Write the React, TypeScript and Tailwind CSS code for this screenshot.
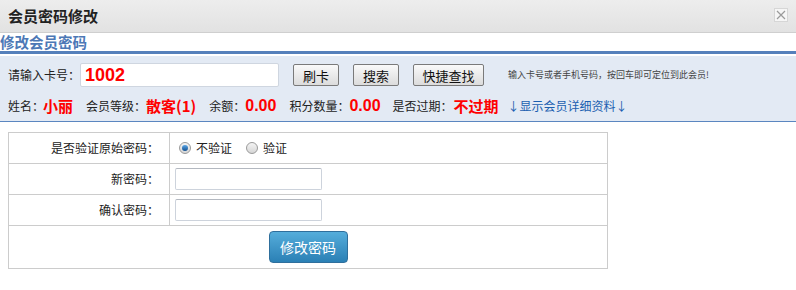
import React from "react";

const cjk = { fontFamily: '"Noto Sans CJK SC", "Liberation Sans", sans-serif' };
const num = { fontFamily: '"Liberation Sans", "Noto Sans CJK SC", sans-serif' };

function Radio({ checked, label }: { checked?: boolean; label: string }) {
  return (
    <label className="flex items-center">
      <span className="flex h-[12px] w-[12px] items-center justify-center rounded-full border border-[#9a9a9a] bg-gradient-to-b from-[#f4f4f4] to-[#d6d6d6]">
        {checked && <span className="h-[6px] w-[6px] rounded-full bg-gradient-to-b from-[#5aa7e8] to-[#13508f]" />}
      </span>
      <span className="ml-[5px] text-[12px] text-[#222]">{label}</span>
    </label>
  );
}

function GrayButton({ children, w }: { children: React.ReactNode; w: string }) {
  return (
    <button
      className={`${w} h-[22px] rounded-[2px] border border-[#7a7a7a] bg-gradient-to-b from-[#fafafa] to-[#dcdcdc] text-[13px] leading-none text-[#111]`}
    >
      {children}
    </button>
  );
}

export default function App() {
  return (
    <div className="h-[290px] w-[796px] overflow-hidden bg-white text-[12px] text-[#222]" style={cjk}>
      {/* title bar */}
      <div className="flex h-[33px] items-center justify-between border-b border-[#cfcfcf] bg-gradient-to-b from-[#ededed] to-[#e2e2e2] pl-[8px] pr-[8px]">
        <span className="text-[15px] font-bold text-[#222]">会员密码修改</span>
        <span className="mb-[3px] flex h-[14px] w-[14px] items-center justify-center border border-[#d6d6d6] bg-[#f6f6f6]">
          <svg width="10" height="10" viewBox="0 0 10 10">
            <path d="M1 1L9 9M9 1L1 9" stroke="#9a9a9a" strokeWidth="1.2" />
          </svg>
        </span>
      </div>

      <div className="h-[18px] text-[14.5px] font-bold leading-[18px] text-[#4d78b6]">修改会员密码</div>
      <div className="h-[3px] bg-[#5580bb]" />

      {/* search panel */}
      <div className="mt-[2px] h-[66px] border-b border-[#5b86c0] bg-[#e3eaf4] pl-[8px]">
        <div className="flex h-[35px] items-center pt-[3px]">
          <span className="w-[72px]">请输入卡号：</span>
          <div className="flex h-[24px] w-[199px] items-center rounded-[2px] border border-[#cfd6e0] bg-white pl-[4px]">
            <span className="text-[18px] font-bold text-[#ff0000]" style={num}>1002</span>
          </div>
          <div className="ml-[14px] flex items-center gap-[14px]">
            <GrayButton w="w-[46px]">刷卡</GrayButton>
            <GrayButton w="w-[46px]">搜索</GrayButton>
            <GrayButton w="w-[71px]">快捷查找</GrayButton>
          </div>
          <span className="ml-[24px] text-[9px] text-[#444]">输入卡号或者手机号码，按回车即可定位到此会员!</span>
        </div>
        <div className="flex h-[30px] items-center">
          <span>姓名：</span>
          <span className="-ml-[1px] text-[15px] font-bold text-[#ff0000]">小丽</span>
          <span className="ml-[13px]">会员等级：</span>
          <span className="text-[15px] font-bold text-[#ff0000]">散客(1)</span>
          <span className="ml-[13px]">余额：</span>
          <span className="text-[16px] font-bold text-[#ff0000]" style={num}>0.00</span>
          <span className="ml-[13px]">积分数量：</span>
          <span className="text-[16px] font-bold text-[#ff0000]" style={num}>0.00</span>
          <span className="ml-[12px]">是否过期：</span>
          <span className="ml-[1px] text-[15px] font-bold text-[#ff0000]">不过期</span>
          <span className="ml-[9px] text-[#1b5fb0]">↓显示会员详细资料↓</span>
        </div>
      </div>

      {/* form table */}
      <div className="ml-[8px] mt-[10px] w-[600px] border border-[#cccccc]">
        <div className="flex h-[31px] border-b border-[#cccccc]">
          <div className="flex w-[161px] items-center justify-end border-r border-[#cccccc] pr-[10px]">是否验证原始密码：</div>
          <div className="flex items-center gap-[14px] pl-[9px]">
            <Radio checked label="不验证" />
            <Radio label="验证" />
          </div>
        </div>
        <div className="flex h-[31px] border-b border-[#cccccc]">
          <div className="flex w-[161px] items-center justify-end border-r border-[#cccccc] pr-[10px]">新密码：</div>
          <div className="flex items-center pl-[5px]">
            <div className="h-[22px] w-[147px] rounded-[2px] border border-[#cdd3dc] border-t-[#b3b8c0] bg-white" />
          </div>
        </div>
        <div className="flex h-[31px] border-b border-[#cccccc]">
          <div className="flex w-[161px] items-center justify-end border-r border-[#cccccc] pr-[10px]">确认密码：</div>
          <div className="flex items-center pl-[5px]">
            <div className="h-[22px] w-[147px] rounded-[2px] border border-[#cdd3dc] border-t-[#b3b8c0] bg-white" />
          </div>
        </div>
        <div className="flex h-[42px] items-center justify-center">
          <button className="h-[32px] w-[79px] rounded-[4px] border border-[#2f6f9c] bg-gradient-to-b from-[#55addb] to-[#2a80b5] text-[14px] text-white">
            修改密码
          </button>
        </div>
      </div>
    </div>
  );
}
